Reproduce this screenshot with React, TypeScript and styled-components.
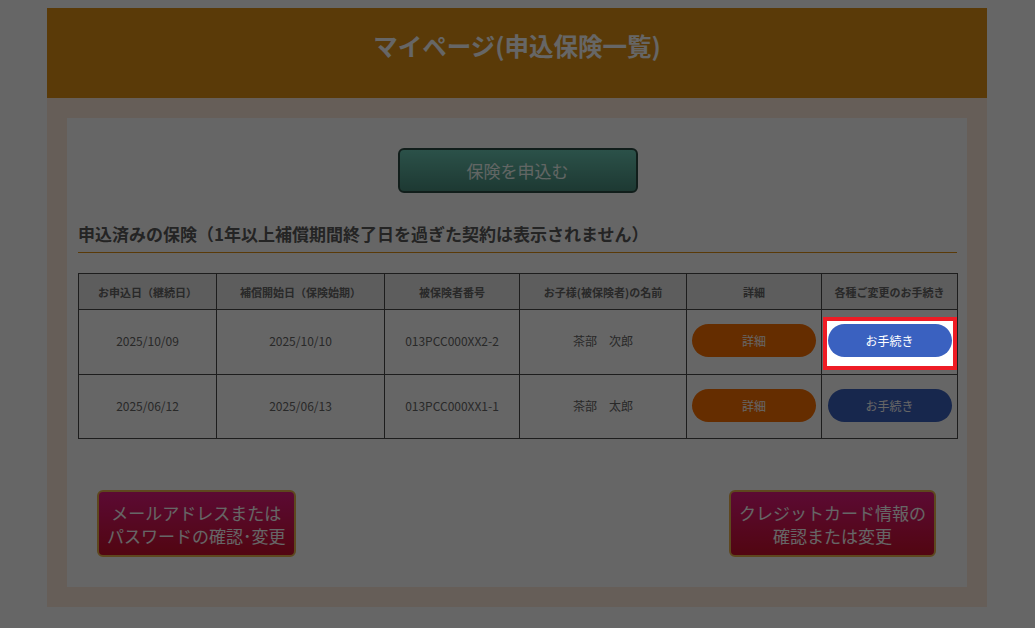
import React from "react";
import styled, { createGlobalStyle } from "styled-components";

const ORANGE = "#e29215";
const FONT = `"Noto Sans CJK JP", "Noto Sans", sans-serif`;

const GlobalStyle = createGlobalStyle`
  body {
    margin: 8px 1px 0 0;
    background: #ffffff;
    font-family: ${FONT};
  }
`;

const Page = styled.div`
  width: 940px;
  margin: 0 auto;
`;

const Header = styled.header`
  height: 90px;
  background: ${ORANGE};
  display: flex;
  align-items: center;
  justify-content: center;
`;

const Title = styled.h1`
  margin: 0 0 16px;
  color: #ffffff;
  font-size: 24.5px;
  font-weight: 700;
`;

const Frame = styled.div`
  background: #ffebdc;
  padding: 20px;
`;

const Panel = styled.main`
  background: #ffffff;
  padding: 30px 10px 30px 11px;
`;

const ApplyButton = styled.button`
  display: block;
  width: 240px;
  height: 45px;
  margin: 0 auto;
  border: 2px solid #2c4c44;
  border-radius: 6px;
  background: linear-gradient(#6ccab6, #4a8f7f);
  color: #f4fffb;
  font-family: ${FONT};
  font-size: 17px;
`;

const SectionTitle = styled.h2`
  margin: 28px 0 20px;
  padding-bottom: 5px;
  border-bottom: 1px solid ${ORANGE};
  color: #5a5a5a;
  font-size: 17px;
  font-weight: 700;
  line-height: 26px;
`;

const Table = styled.table`
  width: 100%;
  border-collapse: collapse;
  table-layout: fixed;
  color: #666666;
`;

const Th = styled.th<{ $w: number }>`
  width: ${(p) => p.$w}px;
  height: 35px;
  border: 1px solid #4a4a4a;
  background: #e8e8e8;
  font-size: 11px;
  font-weight: 700;
  padding: 0;
`;

const Td = styled.td<{ $h: number }>`
  height: ${(p) => p.$h}px;
  border: 1px solid #4a4a4a;
  text-align: center;
  vertical-align: middle;
  font-size: 12px;
  padding: 0 0 3px;
`;

const PillButton = styled.button<{ $color: string }>`
  width: 124px;
  height: 33px;
  border: none;
  border-radius: 17px;
  background: ${(p) => p.$color};
  color: #ffffff;
  font-family: ${FONT};
  font-size: 12px;
  vertical-align: middle;
`;

const Highlight = styled.span`
  position: relative;
  z-index: 101;
  display: inline-block;
  margin: -7px -5px -13px;
  padding: 3px 1px 9px;
  border: 4px solid #ee1c25;
  background: #ffffff;
  line-height: 0;
`;

const BottomRow = styled.div`
  display: flex;
  justify-content: space-between;
  padding: 51px 21px 0 19px;
`;

const AccountButton = styled.button`
  height: 67px;
  padding: 0 8px;
  border: 2px solid #ecb24c;
  border-radius: 6px;
  background: linear-gradient(#e41a80, #cc0f2c);
  color: #ffffff;
  font-family: ${FONT};
  font-size: 17px;
  line-height: 23px;
`;

const Dim = styled.div`
  position: fixed;
  inset: 0;
  z-index: 100;
  background: rgba(0, 0, 0, 0.6);
`;

const columns = [
  { label: "お申込日（継続日）", w: 137 },
  { label: "補償開始日（保険始期）", w: 167 },
  { label: "被保険者番号", w: 134 },
  { label: "お子様(被保険者)の名前", w: 166 },
  { label: "詳細", w: 134 },
  { label: "各種ご変更のお手続き", w: 135 },
];

const contracts = [
  { applied: "2025/10/09", start: "2025/10/10", no: "013PCC000XX2-2", name: "茶部　次郎", h: 61 },
  { applied: "2025/06/12", start: "2025/06/13", no: "013PCC000XX1-1", name: "茶部　太郎", h: 60 },
];

export default function App() {
  return (
    <>
      <GlobalStyle />
      <Page>
        <Header>
          <Title>マイページ(申込保険一覧)</Title>
        </Header>
        <Frame>
          <Panel>
            <ApplyButton>保険を申込む</ApplyButton>
            <SectionTitle>
              申込済みの保険（1年以上補償期間終了日を過ぎた契約は表示されません）
            </SectionTitle>
            <Table>
              <thead>
                <tr>
                  {columns.map((c) => (
                    <Th key={c.label} $w={c.w}>
                      {c.label}
                    </Th>
                  ))}
                </tr>
              </thead>
              <tbody>
                {contracts.map((c, i) => (
                  <tr key={c.no}>
                    <Td $h={c.h}>{c.applied}</Td>
                    <Td $h={c.h}>{c.start}</Td>
                    <Td $h={c.h}>{c.no}</Td>
                    <Td $h={c.h}>{c.name}</Td>
                    <Td $h={c.h}>
                      <PillButton $color="#fd7000">詳細</PillButton>
                    </Td>
                    <Td $h={c.h}>
                      {i === 0 ? (
                        <Highlight>
                          <PillButton $color="#3a61c0">お手続き</PillButton>
                        </Highlight>
                      ) : (
                        <PillButton $color="#3a61c0">お手続き</PillButton>
                      )}
                    </Td>
                  </tr>
                ))}
              </tbody>
            </Table>
            <BottomRow>
              <AccountButton>
                メールアドレスまたは
                <br />
                パスワードの確認･変更
              </AccountButton>
              <AccountButton>
                クレジットカード情報の
                <br />
                確認または変更
              </AccountButton>
            </BottomRow>
          </Panel>
        </Frame>
      </Page>
      <Dim />
    </>
  );
}
